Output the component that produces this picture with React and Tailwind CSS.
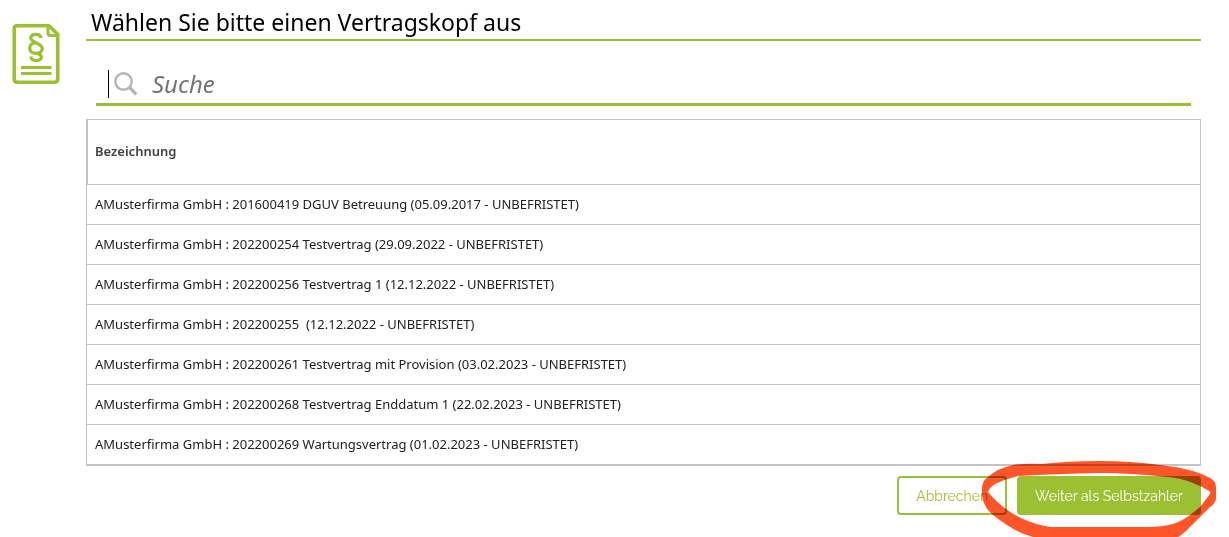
const contracts = [
  "AMusterfirma GmbH : 201600419 DGUV Betreuung (05.09.2017 - UNBEFRISTET)",
  "AMusterfirma GmbH : 202200254 Testvertrag (29.09.2022 - UNBEFRISTET)",
  "AMusterfirma GmbH : 202200256 Testvertrag 1 (12.12.2022 - UNBEFRISTET)",
  "AMusterfirma GmbH : 202200255  (12.12.2022 - UNBEFRISTET)",
  "AMusterfirma GmbH : 202200261 Testvertrag mit Provision (03.02.2023 - UNBEFRISTET)",
  "AMusterfirma GmbH : 202200268 Testvertrag Enddatum 1 (22.02.2023 - UNBEFRISTET)",
  "AMusterfirma GmbH : 202200269 Wartungsvertrag (01.02.2023 - UNBEFRISTET)",
];

const ContractIcon = () => (
  <svg
    className="w-12 h-[61px] shrink-0"
    viewBox="0 0 48 61"
    fill="none"
    stroke="#9bc031"
    aria-hidden="true"
  >
    <path
      d="M37 1.800H5Q2.200 1.800 2.200 5V55Q2.200 58.200 5 58.200H42.500Q45.700 58.200 45.700 55V10.500Z"
      strokeWidth="3.600"
      strokeLinejoin="round"
    />
    <path d="M36 2V9Q36 11.500 38.500 11.500H45" strokeWidth="3" />
    <path
      d="M29 14C28.500 11.500 26.500 10.300 24 10.300C20.800 10.300 18.800 12 18.800 14.200C18.800 18.500 30.300 19 30.300 24.500C30.300 27.500 27.500 29.300 24 29.300C20 29.300 17.700 27 17.700 24C17.700 21 20 18.800 23.500 18.800"
      strokeWidth="3.300"
    />
    <path
      d="M24 29.300C27.500 29.800 29.300 31.200 29.300 33C29.300 35.300 27 36.500 24.300 36.500C21.500 36.500 19.300 35.500 18.800 32.500"
      strokeWidth="3.300"
    />
    <path d="M9 43.500H39.500M9 49.500H39.500" strokeWidth="3" />
  </svg>
);

const SearchIcon = () => (
  <svg
    className="w-6 h-6 shrink-0"
    viewBox="0 0 24 24"
    fill="none"
    stroke="#b5b5b5"
    aria-hidden="true"
  >
    <circle cx="9.500" cy="9.500" r="8.200" strokeWidth="2.400" />
    <path d="M15.500 15.500L22.300 22.300" strokeWidth="3.200" />
  </svg>
);

const SearchField = () => (
  <div className="mx-2.5 mt-6 h-[41px] pl-3 flex items-center border-b-3 border-[#9bc031]">
    <span className="w-px h-7 bg-black"></span>
    <label htmlFor="search" aria-label="Suche" className="ml-[5px]">
      <SearchIcon />
    </label>
    <input
      id="search"
      type="text"
      placeholder="Suche"
      className="ml-3.5 flex-1 min-w-0 h-8 text-2xl leading-8 italic outline-none placeholder:text-[#757575]"
    />
  </div>
);

const ContractTable = () => (
  <table className="w-full mt-[13px] border-separate border-spacing-0 border border-b-2 border-[#c4c4c4] text-left text-[13px] text-[#212121]">
    <thead>
      <tr>
        <th className="h-[65px] px-[7px] border-l border-b border-[#c4c4c4] font-semibold text-[#424242]">
          Bezeichnung
        </th>
      </tr>
    </thead>
    <tbody>
      {contracts.map((contract) => (
        <tr key={contract} className="group">
          <td className="h-10 px-2 border-b border-[#c4c4c4] whitespace-pre group-last:h-[39px] group-last:border-b-0">
            {contract}
          </td>
        </tr>
      ))}
    </tbody>
  </table>
);

const HighlightMark = () => (
  <svg
    className="absolute -left-9 -top-4 w-[236px] h-[80px] mix-blend-multiply pointer-events-none"
    viewBox="0 0 236 80"
    fill="#ff5528"
    fillRule="evenodd"
    aria-hidden="true"
  >
    <path d="M1 27Q2 20 7 17Q17 8 32 5Q45 3 60 4Q90 1 117 1Q150 1 179 5Q198 7 212 11Q222 14 229 18Q235 21 235 27V39Q234 44 229 47L206 70Q198 78 190 80H64Q40 75 26 65Q12 56 7 50Q2 43 1 36ZM7 32Q22 50 42 59Q56 65 69 67H166Q182 67 192 64Q203 61 219 47L229 34Q230 32 228 31Q220 26 212 23Q200 18 186 17Q150 13 119 13Q75 14 37 16Q22 20 14 24Q8 28 7 32Z" />
  </svg>
);

export default function App() {
  return (
    <div className="flex overflow-hidden bg-white pl-3 pr-7 pb-[22px] font-['Noto_Sans','Segoe_UI',sans-serif]">
      <div className="pt-6 mr-[26px]">
        <ContractIcon />
      </div>
      <main className="flex-1 min-w-0">
        <h1 className="h-[41px] pt-1.5 pl-[5px] border-b-2 border-[#9bc031] text-[23px] leading-8 text-black">
          Wählen Sie bitte einen Vertragskopf aus
        </h1>
        <SearchField />
        <ContractTable />
        <div className="mt-2.5 flex justify-end gap-2.5 font-[Raleway,Lato,sans-serif] text-sm">
          <button
            type="button"
            className="h-[39px] px-[17px] rounded border-2 border-[#9bc031] bg-white text-[#9bc031]"
          >
            Abbrechen
          </button>
          <div className="relative">
            <button
              type="button"
              className="h-[39px] px-[18px] rounded bg-[#9bc031] text-white"
            >
              Weiter als Selbstzahler
            </button>
            <HighlightMark />
          </div>
        </div>
      </main>
    </div>
  );
}
